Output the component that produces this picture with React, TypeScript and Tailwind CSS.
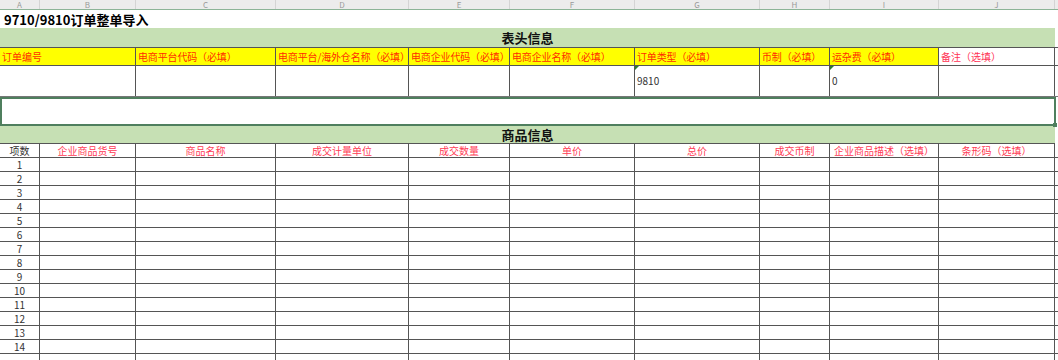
import React from "react";

const cols = ["A", "B", "C", "D", "E", "F", "G", "H", "I", "J"];
const grid = "grid grid-cols-[40px_96px_140px_133px_101px_125px_125px_70px_109px_116px]";

const headFields = [
  "电商平台代码（必填）",
  "电商平台/海外仓名称（必填）",
  "电商企业代码（必填）",
  "电商企业名称（必填）",
  "订单类型（必填）",
  "币制（必填）",
  "运杂费（必填）",
];

const goodsFields = [
  "企业商品货号",
  "商品名称",
  "成交计量单位",
  "成交数量",
  "单价",
  "总价",
  "成交币制",
  "企业商品描述（选填）",
  "条形码（选填）",
];

function Marker() {
  return (
    <span className="absolute left-0 top-0 h-0 w-0 border-t-[4px] border-r-[4px] border-t-[#2e7d32] border-r-transparent" />
  );
}

export default function App() {
  const rows = Array.from({ length: 15 }, (_, i) => i + 1);
  const dataCells = ["C", "D", "E", "F", "G", "H", "I", "J"];

  return (
    <div
      className="h-[360px] w-[1058px] overflow-hidden bg-white text-[#222]"
      style={{ fontFamily: '"Noto Sans CJK SC", "Noto Sans", sans-serif' }}
    >
      {/* column letters */}
      <div className={`${grid} h-[10px] bg-[#ececec] border-b border-[#8cb497]`}>
        {cols.map((c) => (
          <div
            key={c}
            className="flex items-center justify-center border-r border-[#d4d4d4] text-[8px] leading-[8px] text-[#9a9a9a]"
          >
            {c}
          </div>
        ))}
      </div>

      {/* title */}
      <div className="flex h-[18px] w-[1055px] items-center pl-[4px] text-[13px] font-bold leading-none text-black">
        9710/9810订单整单导入
      </div>

      {/* 表头信息 */}
      <div className="flex h-[19px] w-[1055px] items-center justify-center bg-[#c6e0b4] text-[13px] font-bold leading-none text-[#111]">
        表头信息
      </div>

      {/* header fields */}
      <div className={`${grid} h-[19px] border-t border-b border-[#555]`}>
        <div className="col-span-2 flex items-center border-r border-[#555] bg-[#ffff00] pl-[2px] text-[10px] leading-none text-[#ff2d00]">
          订单编号
        </div>
        {headFields.map((f) => (
          <div
            key={f}
            className="flex items-center overflow-hidden whitespace-nowrap border-r border-[#555] bg-[#ffff00] pl-[2px] text-[10px] leading-none tracking-[-0.15px] text-[#ff2d00]"
          >
            {f}
          </div>
        ))}
        <div className="flex items-center border-r border-[#555] bg-white pl-[2px] text-[10px] leading-none text-[#ff3355]">
          备注（选填）
        </div>
      </div>

      {/* header data row */}
      <div className={`${grid} h-[31px] border-b border-[#777]`}>
        <div className="col-span-2 border-r border-[#555]" />
        {dataCells.map((c) => (
          <div
            key={c}
            className="relative flex items-center border-r border-[#555] pl-[2px] text-[10px] leading-none text-[#333]"
          >
            {c === "G" && (
              <>
                <Marker />
                9810
              </>
            )}
            {c === "I" && (
              <>
                <Marker />0
              </>
            )}
          </div>
        ))}
      </div>

      {/* merged empty row (selected) */}
      <div className="relative h-[29px] w-[1056px] border-2 border-[#4f7f5e]">
        <span className="absolute -bottom-[3px] -right-[3px] h-[4px] w-[4px] bg-[#4f7f5e]" />
      </div>

      {/* 商品信息 */}
      <div className="flex h-[18px] w-[1055px] items-center justify-center border-b border-[#555] bg-[#c6e0b4] text-[13px] font-bold leading-none text-[#111]">
        商品信息
      </div>

      {/* goods header */}
      <div className={`${grid} h-[14px] border-b border-[#555]`}>
        <div className="flex items-center justify-center border-r border-[#555] text-[10px] leading-none text-[#333]">
          项数
        </div>
        {goodsFields.map((f) => (
          <div
            key={f}
            className="flex items-center justify-center overflow-hidden whitespace-nowrap border-r border-[#555] text-[10px] leading-none text-[#ff3b55]"
          >
            {f}
          </div>
        ))}
      </div>

      {/* goods rows */}
      {rows.map((n) => (
        <div key={n} className={`${grid} h-[14px] border-b border-[#555]`}>
          <div className="flex items-center justify-center border-r border-[#555] text-[10px] leading-none text-[#333]">
            {n < 15 ? n : ""}
          </div>
          {goodsFields.map((f) => (
            <div key={f} className="border-r border-[#555]" />
          ))}
        </div>
      ))}
    </div>
  );
}
